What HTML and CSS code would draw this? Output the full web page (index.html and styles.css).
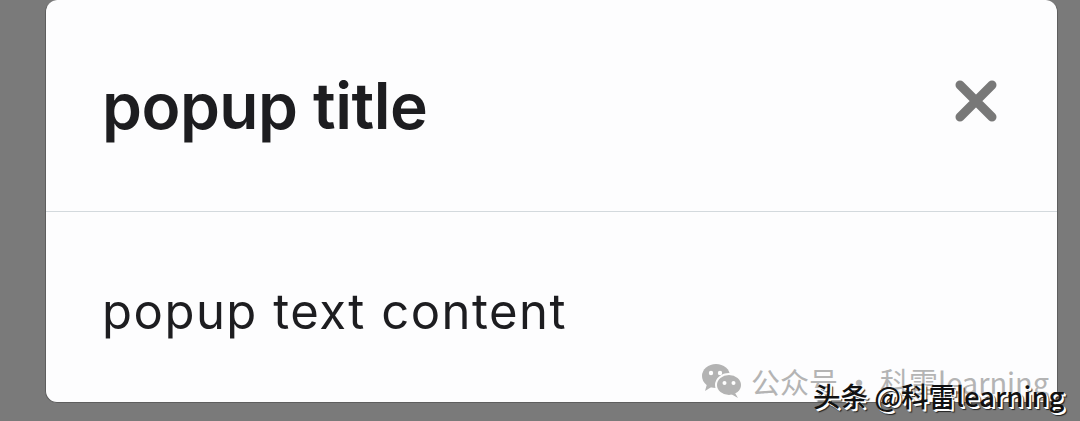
FILE: index.html
```html
<!DOCTYPE html>
<html lang="en">
<head>
    <meta charset="UTF-8">
    <meta name="viewport" content="width=device-width, initial-scale=1.0">
    <title>Popup</title>
    <link rel="stylesheet" href="styles.css">
</head>
<body>
    <div class="popup">
        <div class="popup-header">
            <h1 class="popup-title">popup title</h1>
            <button class="popup-close" aria-label="close">
                <svg width="44" height="44" viewBox="0 0 44 44">
                    <path d="M6 6 L38 38 M38 6 L6 38" stroke="#787878" stroke-width="9" stroke-linecap="round"/>
                </svg>
            </button>
        </div>
        <div class="popup-body">
            <p class="popup-text">popup text content</p>
        </div>

        <!-- watermarks -->
        <div class="mark-wechat">
            <svg class="wechat-icon" width="42" height="36" viewBox="0 0 42 36">
                <ellipse cx="15" cy="13" rx="14" ry="12" fill="#b3b3b3"/>
                <path d="M6 21 L4 28 L12 23 Z" fill="#b3b3b3"/>
                <ellipse cx="28" cy="22" rx="13" ry="11" fill="#b3b3b3" stroke="#fdfdfd" stroke-width="2"/>
                <path d="M34 30 L37 35 L30 31 Z" fill="#b3b3b3"/>
                <circle cx="10" cy="10" r="2.2" fill="#fff"/>
                <circle cx="19" cy="10" r="2.2" fill="#fff"/>
                <circle cx="23.5" cy="20" r="2" fill="#fff"/>
                <circle cx="32.5" cy="20" r="2" fill="#fff"/>
            </svg>
            <span>公众号 · 科雷learning</span>
        </div>
        <div class="mark-toutiao">头条 @科雷learning</div>
    </div>
</body>
</html>
```

FILE: styles.css
```css
body {
    margin: 0;
    padding: 0;
    background-color: #7a7a7a;
    font-family: Inter, "Noto Sans CJK SC", sans-serif;
    height: 421px;
    overflow: hidden;
}

.popup {
    position: relative;
    margin-left: 45px;
    width: 1011px;
    height: 402px;
    background-color: #fdfdfe;
    border: 1px solid #5e5e5e;
    border-top: none;
    border-radius: 12px;
}

.popup-header {
    height: 211px;
    display: flex;
    align-items: center;
    justify-content: space-between;
    padding: 0 59px 0 56px;
    border-bottom: 1px solid #d3d9dd;
}

.popup-title {
    margin: 0;
    font-size: 64px;
    font-weight: 600;
    color: #1d1d20;
    letter-spacing: -0.5px;
}

.popup-close {
    background: none;
    border: none;
    padding: 0;
    display: flex;
    margin-top: -10px;
}

.popup-body {
    padding: 70px 56px 0;
}

.popup-text {
    margin: 0;
    font-size: 49px;
    letter-spacing: 1.5px;
    color: #1d1d20;
}

.mark-wechat {
    position: absolute;
    left: 655px;
    top: 360px;
    display: flex;
    align-items: center;
    gap: 8px;
    color: #b4b4b4;
    font-size: 29px;
    font-family: "Noto Sans CJK SC", sans-serif;
}

.mark-toutiao {
    position: absolute;
    left: 767px;
    top: 375px;
    font-family: "Noto Sans CJK SC", sans-serif;
    font-size: 27.5px;
    font-weight: 500;
    color: #111;
    text-shadow: 1px 1px 0 #fff, 2px 2px 0 #fff, 3px 3px 1px #222;
    white-space: nowrap;
}
```
